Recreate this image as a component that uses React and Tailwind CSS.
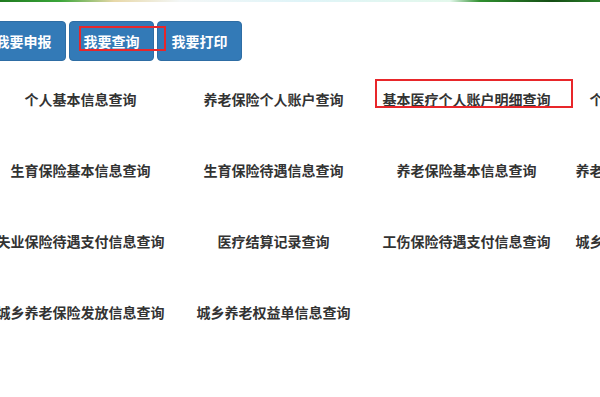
const FONT = { fontFamily: '"Noto Sans CJK SC", "Microsoft YaHei", sans-serif' };

const buttons = ['我要申报', '我要查询', '我要打印'];

const rows = [
  ['个人基本信息查询', '养老保险个人账户查询', '基本医疗个人账户明细查询', '个人缴费明细信息查询'],
  ['生育保险基本信息查询', '生育保险待遇信息查询', '养老保险基本信息查询', '养老保险待遇支付信息查询'],
  ['失业保险待遇支付信息查询', '医疗结算记录查询', '工伤保险待遇支付信息查询', '城乡养老保险缴费信息查询'],
  ['城乡养老保险发放信息查询', '城乡养老权益单信息查询', '', ''],
];

export default function App() {
  return (
    <div className="w-[600px] h-[397px] overflow-hidden bg-white relative" style={FONT}>
      {/* banner remnant at the top */}
      <div className="h-[2px] w-full bg-[linear-gradient(90deg,#1f7a1f_0%,#3aa63a_10%,#e8d8a8_19%,#f3f7f7_30%,#dff4f8_50%,#e3f8ec_75%,#2f8f2f_80%,#144d14_92%,#2a7f2a_100%)]" />

      {/* tab buttons */}
      <div className="flex gap-[3px] ml-[-19px] mt-[19px]">
        {buttons.map((b, i) => (
          <div
            key={b}
            className={`relative w-[85px] h-[40px] rounded-[4px] bg-[#337ab7] border border-[#2e6da4] flex items-center justify-center text-white font-bold text-[14px] ${i === 1 ? 'z-10' : ''}`}
          >
            {b}
            {i === 1 && (
              <div className="absolute left-[9px] top-[4px] w-[87px] h-[25px] border-2 border-[#e8262a]" />
            )}
          </div>
        ))}
      </div>

      {/* query links grid */}
      <div className="ml-[-16px] mt-[3px] w-[772px]">
        {rows.map((row, r) => (
          <div key={r} className="flex h-[71px]">
            {row.map((t, c) => (
              <div key={c} className="relative w-[193px] shrink-0 flex items-center justify-center">
                <span className="text-[14px] font-bold text-[#333] whitespace-nowrap">{t}</span>
                {r === 0 && c === 2 && (
                  <div className="absolute left-[5px] top-[15px] w-[198px] h-[29px] border-2 border-[#e8262a]" />
                )}
              </div>
            ))}
          </div>
        ))}
      </div>
    </div>
  );
}
